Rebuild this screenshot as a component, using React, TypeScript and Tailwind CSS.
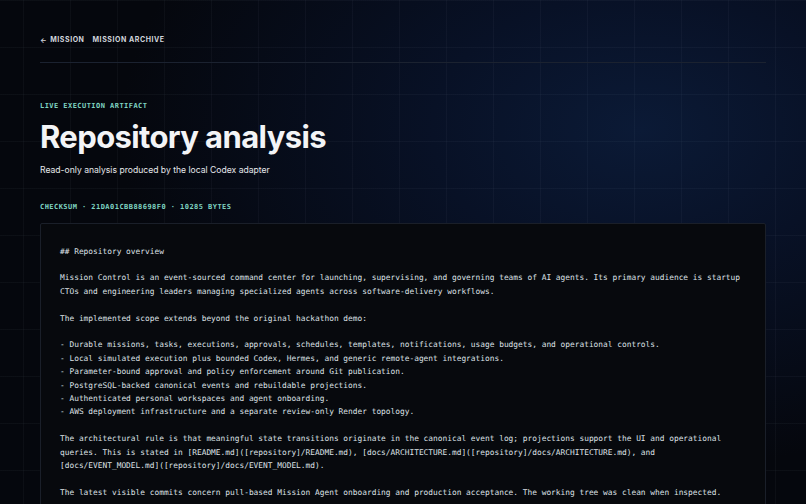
const report = `## Repository overview

Mission Control is an event-sourced command center for launching, supervising, and governing teams of AI agents. Its primary audience is startup CTOs and engineering leaders managing specialized agents across software-delivery workflows.

The implemented scope extends beyond the original hackathon demo:

- Durable missions, tasks, executions, approvals, schedules, templates, notifications, usage budgets, and operational controls.
- Local simulated execution plus bounded Codex, Hermes, and generic remote-agent integrations.
- Parameter-bound approval and policy enforcement around Git publication.
- PostgreSQL-backed canonical events and rebuildable projections.
- Authenticated personal workspaces and agent onboarding.
- AWS deployment infrastructure and a separate review-only Render topology.

The architectural rule is that meaningful state transitions originate in the canonical event log; projections support the UI and operational queries. This is stated in [README.md]([repository]/README.md), [docs/ARCHITECTURE.md]([repository]/docs/ARCHITECTURE.md), and [docs/EVENT_MODEL.md]([repository]/docs/EVENT_MODEL.md).

The latest visible commits concern pull-based Mission Agent onboarding and production acceptance. The working tree was clean when inspected.

## Architecture

The repository is organised as a pnpm monorepo with a Next.js web app, a worker process, and shared domain packages.`

export default function App() {
  return (
    <div className="relative h-screen w-full overflow-hidden bg-[#05070d] font-['Inter','Liberation_Sans',sans-serif] text-gray-100">
      {/* background glow + grid */}
      <div className="pointer-events-none absolute inset-0 bg-[radial-gradient(ellipse_520px_340px_at_640px_130px,#0b1a36_0%,#081126_40%,rgba(5,7,13,0)_100%)]" />
      <div className="pointer-events-none absolute inset-0 bg-[linear-gradient(to_right,rgba(148,163,184,0.05)_1px,transparent_1px),linear-gradient(to_bottom,rgba(148,163,184,0.05)_1px,transparent_1px)] bg-[size:47px_47px] bg-[position:-24px_0px]" />

      <div className="relative px-10 pt-[35px]">
        <nav className="flex h-[10px] items-center gap-2 text-[7px] font-bold uppercase leading-[10px] tracking-[0.08em] text-gray-300">
          <span className="flex items-center gap-[3px]">
            <span className="leading-none">←</span>
            Mission
          </span>
          <span>Mission Archive</span>
        </nav>
        <div className="mt-[17px] h-px bg-[#1b2230]" />

        <div className="mt-[40px] font-['DejaVu_Sans_Mono','Liberation_Mono',monospace] text-[7px] font-bold uppercase leading-[7px] tracking-[0.065em] text-[#7fd4c1]">
          Live execution artifact
        </div>
        <h1 className="mt-[8.5px] text-[31px] font-bold leading-[36px] tracking-[-0.02em] text-[#f3f4f6]">
          Repository analysis
        </h1>
        <p className="mt-[9px] text-[8.6px] leading-[12px] text-gray-200">
          Read-only analysis produced by the local Codex adapter
        </p>
        <div className="mt-[28px] font-['DejaVu_Sans_Mono','Liberation_Mono',monospace] text-[7px] font-bold uppercase leading-[7px] tracking-[0.065em] text-[#7fd4c1]">
          Checksum · 21DA01CBB88698F0 · 10285 bytes
        </div>

        <div className="mt-[12px] rounded-[2px] border border-[#1a1f29] bg-[#07090d] pb-5 pl-[19px] pr-[12px] pt-[21px]">
          <pre className="whitespace-pre-wrap font-['DejaVu_Sans_Mono','Liberation_Mono',monospace] text-[7.85px] leading-[13.4px] text-[#dde0e5]">
            {report}
          </pre>
        </div>
      </div>
    </div>
  )
}
